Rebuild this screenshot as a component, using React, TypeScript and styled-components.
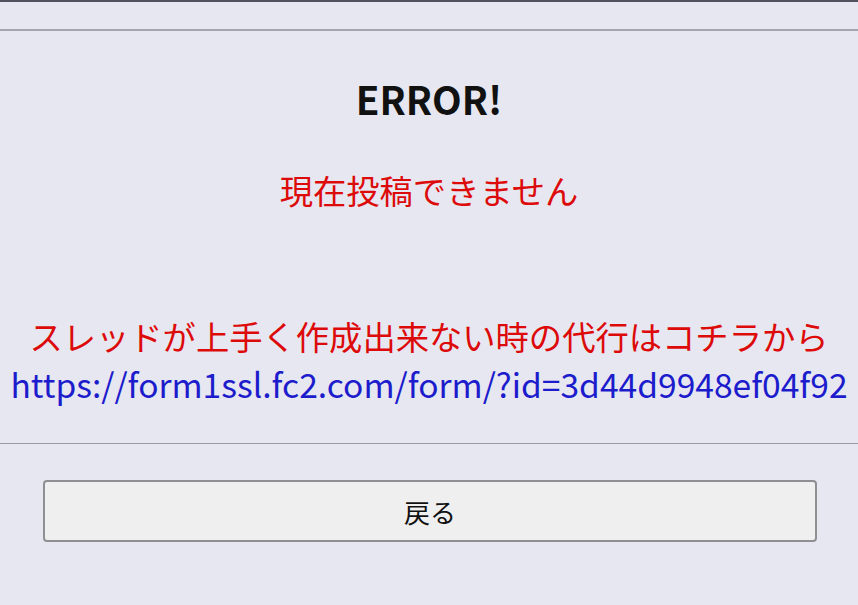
import React from "react";
import styled, { createGlobalStyle } from "styled-components";

const GlobalStyle = createGlobalStyle`
  html, body {
    margin: 0;
    padding: 0;
    background: #e7e7f1;
  }
  body {
    font-family: "Noto Sans CJK JP", "Noto Sans", sans-serif;
  }
`;

const Page = styled.div`
  min-height: 605px;
  background: #e7e7f1;
  border-top: 2px solid #4f525e;
`;

const Header = styled.div`
  height: 27px;
`;

const Rule = styled.hr<{ $thick?: boolean }>`
  margin: 0;
  border: 0;
  border-top: ${(p) => (p.$thick ? "2px solid #a6a6ae" : "1px solid #9a9a9e")};
`;

const Content = styled.div`
  display: flex;
  flex-direction: column;
  align-items: center;
  text-align: center;
  padding-top: 44px;
  padding-bottom: 35px;
`;

const Title = styled.h1`
  margin: 0;
  font-size: 38.6px;
  line-height: 46px;
  font-weight: 700;
  color: #111;
`;

const Message = styled.p`
  margin: 45px 0 0;
  font-size: 33.3px;
  line-height: 48px;
  color: #dd0a0a;
`;

const Notice = styled.div`
  margin-top: 98px;
  font-size: 33.3px;
  line-height: 48px;
  color: #dd0a0a;
`;

const Link = styled.a`
  display: block;
  font-size: 33.6px;
  color: #1c1ccc;
  text-decoration: none;
`;

const Footer = styled.div`
  padding: 36px 41px 0 43px;
`;

const BackButton = styled.button`
  display: block;
  width: 100%;
  height: 62px;
  background: #efefef;
  border: 2px solid #8f8f93;
  border-radius: 4px;
  font-family: "Noto Sans CJK JP", sans-serif;
  font-size: 26px;
  color: #111;
  cursor: pointer;
`;

const App = () => {
  return (
    <Page>
      <GlobalStyle />
      <Header />
      <Rule $thick />
      <Content>
        <Title>ERROR!</Title>
        <Message>現在投稿できません</Message>
        <Notice>
          スレッドが上手く作成出来ない時の代行はコチラから
          <Link href="#">https://form1ssl.fc2.com/form/?id=3d44d9948ef04f92</Link>
        </Notice>
      </Content>
      <Rule />
      <Footer>
        <BackButton>戻る</BackButton>
      </Footer>
    </Page>
  );
};

export default App;
